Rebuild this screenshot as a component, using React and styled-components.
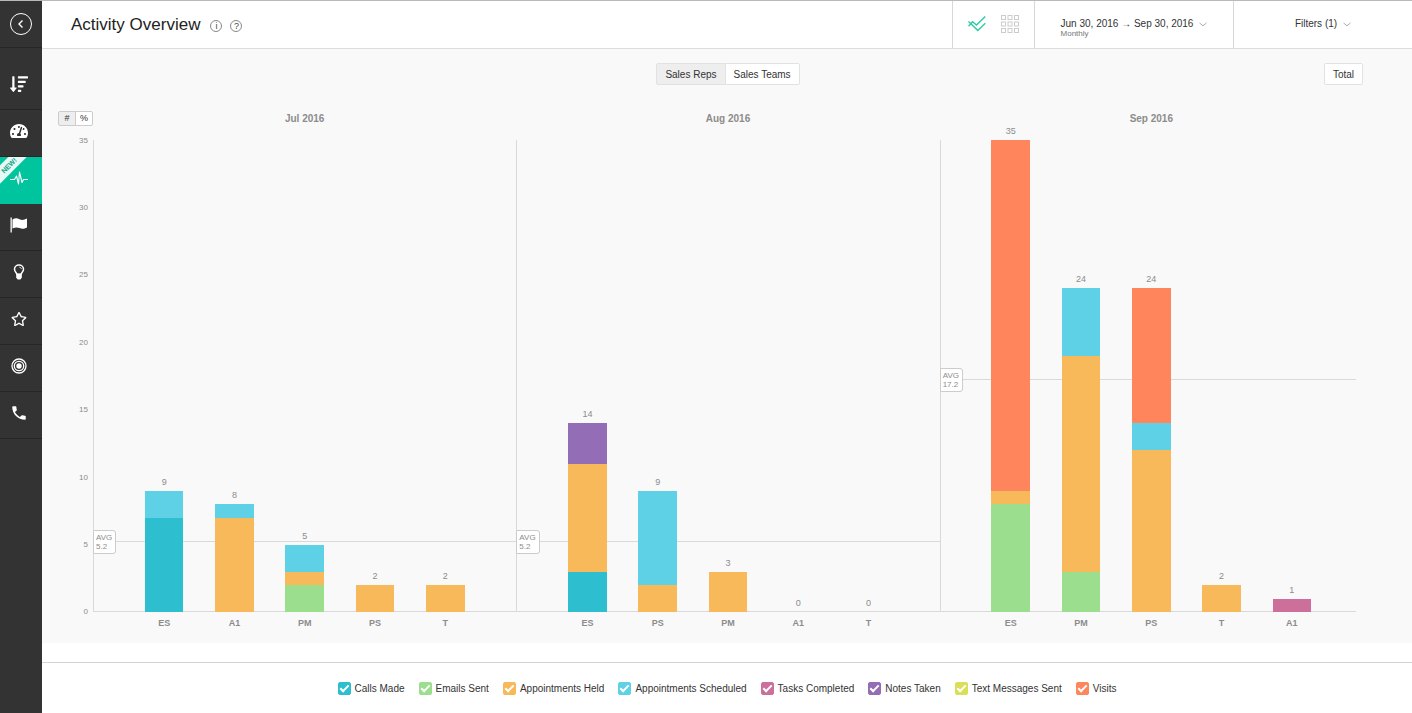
import React, { useState } from 'react';
import styled, { createGlobalStyle } from 'styled-components';
import { FaSortAmountDown, FaTachometerAlt, FaRegStar } from 'react-icons/fa';
import { MdPhone } from 'react-icons/md';

const MAX = 35;

const SERIES = {
  calls: { label: 'Calls Made', color: '#2dbfcf' },
  emails: { label: 'Emails Sent', color: '#9bde8d' },
  held: { label: 'Appointments Held', color: '#f8b95b' },
  scheduled: { label: 'Appointments Scheduled', color: '#5fd1e6' },
  tasks: { label: 'Tasks Completed', color: '#cd6f9b' },
  notes: { label: 'Notes Taken', color: '#936db5' },
  texts: { label: 'Text Messages Sent', color: '#d9df57' },
  visits: { label: 'Visits', color: '#ff855d' },
};

// segments are listed from top to bottom
const MONTHS = [
  {
    title: 'Jul 2016',
    avg: 5.2,
    bars: [
      { name: 'ES', parts: [['scheduled', 2], ['calls', 7]] },
      { name: 'A1', parts: [['scheduled', 1], ['held', 7]] },
      { name: 'PM', parts: [['scheduled', 2], ['held', 1], ['emails', 2]] },
      { name: 'PS', parts: [['held', 2]] },
      { name: 'T', parts: [['held', 2]] },
    ],
  },
  {
    title: 'Aug 2016',
    avg: 5.2,
    bars: [
      { name: 'ES', parts: [['notes', 3], ['held', 8], ['calls', 3]] },
      { name: 'PS', parts: [['scheduled', 7], ['held', 2]] },
      { name: 'PM', parts: [['held', 3]] },
      { name: 'A1', parts: [] },
      { name: 'T', parts: [] },
    ],
  },
  {
    title: 'Sep 2016',
    avg: 17.2,
    bars: [
      { name: 'ES', parts: [['visits', 26], ['held', 1], ['emails', 8]] },
      { name: 'PM', parts: [['scheduled', 5], ['held', 16], ['emails', 3]] },
      { name: 'PS', parts: [['visits', 10], ['scheduled', 2], ['held', 12]] },
      { name: 'T', parts: [['held', 2]] },
      { name: 'A1', parts: [['tasks', 1]] },
    ],
  },
];

const GlobalStyle = createGlobalStyle`
  * {
    box-sizing: border-box;
  }

  body {
    margin: 0;
    background: #fff;
    color: #333;
    font-family: 'Liberation Sans', Arial, sans-serif;
    font-size: 10px;
  }

  button {
    font: inherit;
    color: inherit;
    cursor: pointer;
  }
`

const Page = styled.div`
  display: flex;
  min-height: 100vh;
  border-top: 1px solid #b9b9b9;
`

const Sidebar = styled.nav`
  flex: none;
  width: 42px;
  background: #333;
`

const BackBar = styled.div`
  display: flex;
  align-items: center;
  justify-content: center;
  height: 47px;
  margin-bottom: 15px;
  border-bottom: 1px solid #262626;
`

const BackButton = styled.button`
  display: flex;
  padding: 0;
  border: 0;
  background: none;
`

const NavLink = styled.a`
  position: relative;
  display: flex;
  align-items: center;
  justify-content: center;
  height: 47px;
  padding: 0 4px 4px 0;
  overflow: hidden;
  border-bottom: 1px solid ${props => props.$active ? '#00c49e' : '#262626'};
  background: ${props => props.$active ? '#00c49e' : 'none'};
  color: #fff;
`

const Ribbon = styled.span`
  position: absolute;
  top: 2px;
  left: -16px;
  width: 50px;
  height: 13px;
  background: #e6f9f5;
  color: #12a587;
  font-size: 7px;
  font-weight: 700;
  line-height: 13px;
  text-align: center;
  transform: rotate(-45deg);
`

const Content = styled.div`
  display: flex;
  flex: 1;
  flex-direction: column;
  min-width: 0;
`

const Header = styled.header`
  display: flex;
  height: 48px;
  border-bottom: 1px solid #dcdcdc;
`

const TitleArea = styled.div`
  display: flex;
  flex: 1;
  align-items: center;
  gap: 8px;
  padding-left: 29px;
`

const Title = styled.h1`
  margin: 0 2px 0 0;
  color: #222;
  font-size: 17px;
  font-weight: 400;
`

const HelpButton = styled.button`
  width: 12px;
  height: 12px;
  margin-top: 2px;
  padding: 0;
  border: 1px solid #888;
  border-radius: 50%;
  background: none;
  color: #444;
  font-size: 9px;
  line-height: 10px;
`

const HeaderCell = styled.div`
  display: flex;
  align-items: center;
  justify-content: center;
  gap: 15px;
  width: ${props => props.$width};
  padding-bottom: 1px;
  border-left: 1px solid #d8d8d8;
`

const ViewButton = styled.button`
  display: flex;
  padding: 0;
  border: 0;
  background: none;
`

const MenuButton = styled.button`
  display: flex;
  align-items: center;
  gap: 6px;
  padding: 0;
  border: 0;
  background: none;
  line-height: 12px;
`

const DateRange = styled.span`
  display: flex;
  flex-direction: column;
  padding-top: 8px;
  text-align: left;
`

const Period = styled.small`
  color: #777;
  font-size: 8px;
  line-height: 8px;
`

const Board = styled.main`
  display: flex;
  flex: 1;
  flex-direction: column;
  padding: 14px 49px 13px 16px;
  background: #f9f9f9;
`

const Toolbar = styled.div`
  display: grid;
  grid-template-columns: 1fr auto 1fr;
  padding-left: 35px;
`

const Toggle = styled.div`
  display: flex;
  grid-column: 2;
`

const Button = styled.button`
  height: 22px;
  padding: 0 8px;
  border: 1px solid #e2e2e2;
  background: ${props => props.$active ? '#eee' : '#fff'};

  &:first-child {
    border-radius: 2px 0 0 2px;
  }

  &:last-child {
    border-radius: 0 2px 2px 0;
  }

  & + & {
    margin-left: -1px;
  }
`

const TotalButton = styled(Button)`
  justify-self: end;

  &:last-child {
    border-radius: 2px;
  }
`

const Chart = styled.section`
  display: flex;
  flex: 1;
  margin-top: 26px;
`

const Axis = styled.div`
  display: flex;
  flex-direction: column;
  width: 35px;
`

const UnitToggle = styled.div`
  display: flex;
  height: 29px;
`

const UnitButton = styled(Button)`
  flex: 1;
  height: 15px;
  padding: 0;
  border-color: #ccc;
  font-size: 9px;
  line-height: 13px;
`

const Ticks = styled.div`
  display: flex;
  flex: 1;
  flex-direction: column;
  justify-content: space-between;
  min-height: 300px;
  margin-bottom: 18px;
  padding-right: 5px;
`

const Tick = styled.span`
  display: flex;
  align-items: center;
  justify-content: flex-end;
  height: 0;
  color: #8c8c8c;
  font-size: 8px;
`

const Month = styled.div`
  display: flex;
  flex: 1;
  flex-direction: column;
`

const MonthTitle = styled.h2`
  height: 29px;
  margin: 0;
  color: #8c8c8c;
  font-size: 10px;
  font-weight: 700;
  line-height: 16px;
  text-align: center;
`

const Plot = styled.div`
  position: relative;
  display: flex;
  flex: 1;
  padding: 0 36px 0 35px;
  border-left: 1px solid #d9d9d9;
`

const Rule = styled.div`
  position: absolute;
  right: ${props => props.$last ? '7px' : 0};
  left: 0;
  border-top: 1px solid #d9d9d9;
`

const Average = styled.div`
  position: absolute;
  left: -1px;
  padding: 2px 3px 2px 2px;
  border: 1px solid #ccc;
  border-radius: 0 3px 3px 0;
  background: #fff;
  color: #8c8c8c;
  font-size: 8px;
  line-height: 9px;
  transform: translateY(50%);
`

const Slot = styled.div`
  position: relative;
  display: flex;
  flex: 1;
  flex-direction: column;
  align-items: center;
`

const Space = styled.div`
  display: flex;
  align-items: flex-end;
  min-height: 0;
`

const Value = styled.span`
  height: 15px;
  color: #8c8c8c;
  font-size: 9px;
  line-height: 12px;
`

const Segment = styled.div`
  width: 55%;
  background: ${props => props.$color};
`

const Names = styled.div`
  display: flex;
  padding: 0 36px;
`

const Name = styled.span`
  flex: 1;
  padding-top: 4px;
  color: #8c8c8c;
  font-size: 9px;
  font-weight: 700;
  line-height: 14px;
  text-align: center;
`

const Legend = styled.footer`
  display: flex;
  flex-wrap: wrap;
  align-items: center;
  justify-content: center;
  gap: 8px 14px;
  min-height: 51px;
  margin-top: 19px;
  border-top: 1px solid #d4d4d4;
`

const LegendItem = styled.label`
  display: flex;
  align-items: center;
  gap: 4px;
  cursor: pointer;
`

const Checkbox = styled.input`
  display: flex;
  align-items: center;
  justify-content: center;
  width: 13px;
  height: 13px;
  margin: 0;
  appearance: none;
  border: 1px solid ${props => props.$color};
  border-radius: 2px;
  cursor: pointer;

  &:checked {
    background: ${props => props.$color};
  }

  &:checked::after {
    content: '';
    box-sizing: border-box;
    width: 5px;
    height: 9px;
    margin-bottom: 2px;
    border: solid #fff;
    border-width: 0 2px 2px 0;
    transform: rotate(45deg);
  }
`

const BackIcon = () => (
  <svg width="24" height="24" viewBox="0 0 24 24" fill="none" stroke="#fff">
    <circle cx="12" cy="12" r="10.5" strokeWidth="1" />
    <path d="M13.5 8.5 10 12l3.5 3.5" strokeWidth="1.4" />
  </svg>
)

const PulseIcon = () => (
  <svg width="18" height="14" viewBox="0 0 18 14" fill="none" stroke="#fff" strokeLinejoin="round">
    <path d="M0 8.5h4.5L6.500 5l2 8L9.500 1l2.500 10.500 1.500-3H18" strokeWidth="1.1" />
  </svg>
)

const FlagIcon = () => (
  <svg width="18" height="16" viewBox="0 0 18 16" fill="#fff">
    <path d="M.5.5h1.300v15H.5z" />
    <path d="M2.500 2.500C5 1 7 1 9.500 2.200c2.500 1.200 4.500.8 7.500-.700v9c-3 1.600-5 1.700-7.500.6C7 10 5 10.200 2.500 11.600z" />
  </svg>
)

const BulbIcon = () => (
  <svg width="12" height="16" viewBox="0 0 12 16" fill="none" stroke="#fff">
    <path d="M4 10.500C4 8.800 1.500 7.800 1.500 5.200a4.500 4.200 0 0 1 9 0C10.500 7.800 8 8.800 8 10.500z" strokeWidth="1.500" />
    <path d="M3.200 9.500h5.600v4.200L7.300 15.500H4.700l-1.500-1.800z" fill="#fff" stroke="none" />
    <path d="M6.300 3.200c1.200 0 1.900.7 2 1.800" strokeWidth=".8" />
  </svg>
)

const TargetIcon = () => (
  <svg width="16" height="16" viewBox="0 0 16 16" fill="none" stroke="#fff">
    <circle cx="8" cy="8" r="7" strokeWidth="1.300" />
    <circle cx="8" cy="8" r="4.700" strokeWidth="1.300" />
    <circle cx="8" cy="8" r="2.700" fill="#fff" stroke="none" />
  </svg>
)

const TrendIcon = () => (
  <svg width="18" height="16" viewBox="0 0 18 16" fill="none" stroke="#2fcba6" strokeWidth="1.400">
    <path d="M.5 5.5 9.800 14.500 17.300 7.200" />
    <path d="M.6 10.200 4.500 5.800 8.500 9 17.300.6" />
  </svg>
)

const GridIcon = () => (
  <svg width="18" height="18" viewBox="0 0 18 18" fill="none" stroke="#ccc">
    {[0.5, 7, 13.5].map(y => [0.5, 7, 13.5].map(x => (
      <rect key={`${x}-${y}`} x={x} y={y} width="4" height="4" />
    )))}
  </svg>
)

const Chevron = () => (
  <svg width="8" height="5" viewBox="0 0 8 5" fill="none" stroke="#aaa">
    <path d="M.5 1 4 3.800 7.500 1" />
  </svg>
)

const NAV = [
  { label: 'Leaderboard', icon: <FaSortAmountDown size={18} /> },
  { label: 'Dashboard', icon: <FaTachometerAlt size={18} /> },
  { label: 'Activity', icon: <PulseIcon />, active: true },
  { label: 'Goals', icon: <FlagIcon /> },
  { label: 'Insights', icon: <BulbIcon /> },
  { label: 'Favorites', icon: <FaRegStar size={16} /> },
  { label: 'Targets', icon: <TargetIcon /> },
  { label: 'Calls', icon: <MdPhone size={18} /> },
];

function Bar ({ parts }) {
  const total = parts.reduce((sum, [, count]) => sum + count, 0)

  return (
    <Slot>
      <Space style={{ flex: `${MAX - total} 1 0px` }}><Value>{total}</Value></Space>
      {parts.map(([key, count]) => (
        <Segment key={key} $color={SERIES[key].color} style={{ flex: `${count} 1 0px` }} />
      ))}
    </Slot>
  )
}

function App () {
  const [group, setGroup] = useState('Sales Reps')
  const [unit, setUnit] = useState('#')

  return (
    <Page>
      <GlobalStyle />
      <Sidebar>
        <BackBar>
          <BackButton aria-label="Back"><BackIcon /></BackButton>
        </BackBar>
        {NAV.map(item => (
          <NavLink key={item.label} href="#" aria-label={item.label} $active={item.active}>
            {item.icon}
            {item.active && <Ribbon>NEW!</Ribbon>}
          </NavLink>
        ))}
      </Sidebar>
      <Content>
        <Header>
          <TitleArea>
            <Title>Activity Overview</Title>
            <HelpButton>i</HelpButton>
            <HelpButton>?</HelpButton>
          </TitleArea>
          <HeaderCell $width="82px">
            <ViewButton aria-label="Chart view"><TrendIcon /></ViewButton>
            <ViewButton aria-label="Grid view"><GridIcon /></ViewButton>
          </HeaderCell>
          <HeaderCell $width="199px">
            <MenuButton aria-haspopup="true">
              <DateRange>
                Jun 30, 2016 → Sep 30, 2016
                <Period>Monthly</Period>
              </DateRange>
              <Chevron />
            </MenuButton>
          </HeaderCell>
          <HeaderCell $width="179px">
            <MenuButton aria-haspopup="true">Filters (1) <Chevron /></MenuButton>
          </HeaderCell>
        </Header>
        <Board>
          <Toolbar>
            <Toggle>
              {['Sales Reps', 'Sales Teams'].map(name => (
                <Button key={name} $active={group === name} onClick={() => setGroup(name)}>{name}</Button>
              ))}
            </Toggle>
            <TotalButton>Total</TotalButton>
          </Toolbar>
          <Chart>
            <Axis>
              <UnitToggle>
                {['#', '%'].map(name => (
                  <UnitButton key={name} $active={unit === name} onClick={() => setUnit(name)}>{name}</UnitButton>
                ))}
              </UnitToggle>
              <Ticks>
                {[35, 30, 25, 20, 15, 10, 5, 0].map(n => <Tick key={n}>{n}</Tick>)}
              </Ticks>
            </Axis>
            {MONTHS.map((month, i) => (
              <Month key={month.title}>
                <MonthTitle>{month.title}</MonthTitle>
                <Plot>
                  <Rule $last={i === 2} style={{ bottom: 0 }} />
                  <Rule $last={i === 2} style={{ bottom: `${month.avg / MAX * 100}%` }} />
                  {month.bars.map(bar => <Bar key={bar.name} parts={bar.parts} />)}
                  <Average style={{ bottom: `${month.avg / MAX * 100}%` }}>AVG<br />{month.avg}</Average>
                </Plot>
                <Names>
                  {month.bars.map(bar => <Name key={bar.name}>{bar.name}</Name>)}
                </Names>
              </Month>
            ))}
          </Chart>
        </Board>
        <Legend>
          {Object.entries(SERIES).map(([key, item]) => (
            <LegendItem key={key}>
              <Checkbox type="checkbox" defaultChecked $color={item.color} />
              {item.label}
            </LegendItem>
          ))}
        </Legend>
      </Content>
    </Page>
  )
}

export default App;
